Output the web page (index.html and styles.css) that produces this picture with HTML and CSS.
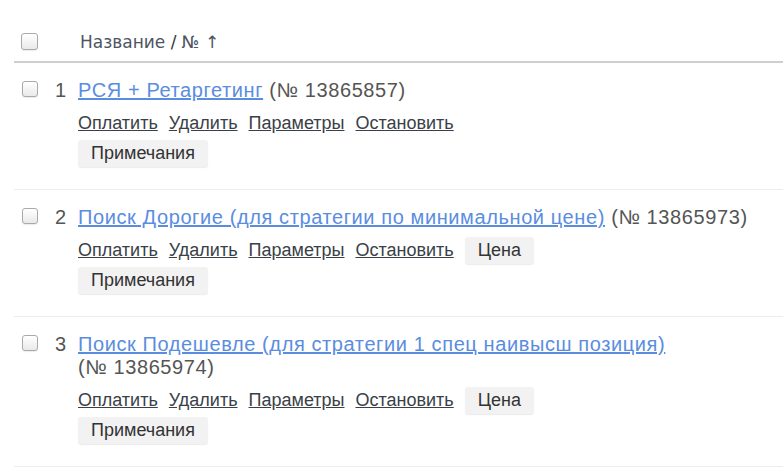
FILE: index.html
```html
<!DOCTYPE html>
<html lang="ru">
<head>
<meta charset="utf-8">
<title>Кампании</title>
<link rel="stylesheet" href="styles.css">
</head>
<body>
<div class="table">
  <div class="head">
    <span class="cb"></span>
    <span class="head-title">Название <span class="slash">/</span> № ↑</span>
  </div>

  <div class="row">
    <div class="lead"><span class="cb"></span><span class="num">1</span></div>
    <div class="body">
      <div class="title"><a class="name" href="#">РСЯ + Ретаргетинг</a> <span class="id">(№ 13865857)</span></div>
      <div class="actions">
        <a href="#">Оплатить</a><a href="#">Удалить</a><a href="#">Параметры</a><a href="#">Остановить</a>
      </div>
      <div class="notes"><span class="btn">Примечания</span></div>
    </div>
  </div>

  <div class="row">
    <div class="lead"><span class="cb"></span><span class="num">2</span></div>
    <div class="body">
      <div class="title"><a class="name" href="#">Поиск Дорогие (для стратегии по минимальной цене)</a> <span class="id">(№ 13865973)</span></div>
      <div class="actions">
        <a href="#">Оплатить</a><a href="#">Удалить</a><a href="#">Параметры</a><a href="#">Остановить</a><span class="btn">Цена</span>
      </div>
      <div class="notes"><span class="btn">Примечания</span></div>
    </div>
  </div>

  <div class="row">
    <div class="lead"><span class="cb"></span><span class="num">3</span></div>
    <div class="body">
      <div class="title"><a class="name" href="#">Поиск Подешевле (для стратегии 1 спец наивысш позиция)</a> <span class="id">(№ 13865974)</span></div>
      <div class="actions">
        <a href="#">Оплатить</a><a href="#">Удалить</a><a href="#">Параметры</a><a href="#">Остановить</a><span class="btn">Цена</span>
      </div>
      <div class="notes"><span class="btn">Примечания</span></div>
    </div>
  </div>
</div>
</body>
</html>
```

FILE: styles.css
```css
html, body {
  margin: 0;
  padding: 0;
  background: #fff;
}
body {
  font-family: "Liberation Sans", Arial, sans-serif;
  color: #555;
}
.table {
  margin-left: 14px;
  padding-top: 20px;
}
.cb {
  display: block;
  box-sizing: border-box;
  width: 17px;
  height: 17px;
  border: 1px solid #a9a9a9;
  border-radius: 3px;
  background: linear-gradient(#ffffff, #e9e9e9);
  box-shadow: inset 0 1px 1px rgba(255,255,255,0.9), 0 1px 1px rgba(0,0,0,0.08);
  flex: none;
}
.head {
  display: flex;
  align-items: center;
  height: 43px;
  padding-left: 7px;
  padding-top: 2px;
  border-bottom: 2px solid #cfcfcf;
  box-sizing: border-box;
}
.head-title {
  margin-left: 42px;
  font-family: "DejaVu Sans", Verdana, sans-serif;
  font-size: 17px;
  color: #4d5563;
}
.slash { color: #333; }
.row {
  display: flex;
  padding: 16px 0 22px 0;
  border-bottom: 1px solid #ececec;
}
.lead {
  display: flex;
  align-items: flex-start;
  width: 64px;
  padding-left: 8px;
  box-sizing: border-box;
  flex: none;
}
.lead .cb {
  width: 16px;
  height: 16px;
  margin-top: 2px;
}
.num {
  margin-left: 17px;
  font-size: 20px;
  line-height: 23px;
  color: #555;
}
.body {
  flex: 1;
  padding-right: 20px;
}
.title {
  font-size: 20px;
  line-height: 23px;
  letter-spacing: 0.6px;
  color: #555;
}
.name {
  color: #5a8ddf;
  text-decoration: underline;
}
.id {
  white-space: nowrap;
}
.actions {
  display: flex;
  align-items: center;
  height: 27px;
  margin-top: 8px;
  font-size: 18px;
}
.actions a {
  color: #3a3f48;
  text-decoration: underline;
  margin-right: 11px;
}
.btn {
  display: inline-block;
  box-sizing: border-box;
  height: 27px;
  line-height: 27px;
  padding: 0 13px;
  background: #f2f2f3;
  border-radius: 3px;
  box-shadow: 0 1px 1px rgba(0,0,0,0.08);
  color: #333;
  font-size: 18px;
}
.notes {
  margin-top: 3px;
}
```
